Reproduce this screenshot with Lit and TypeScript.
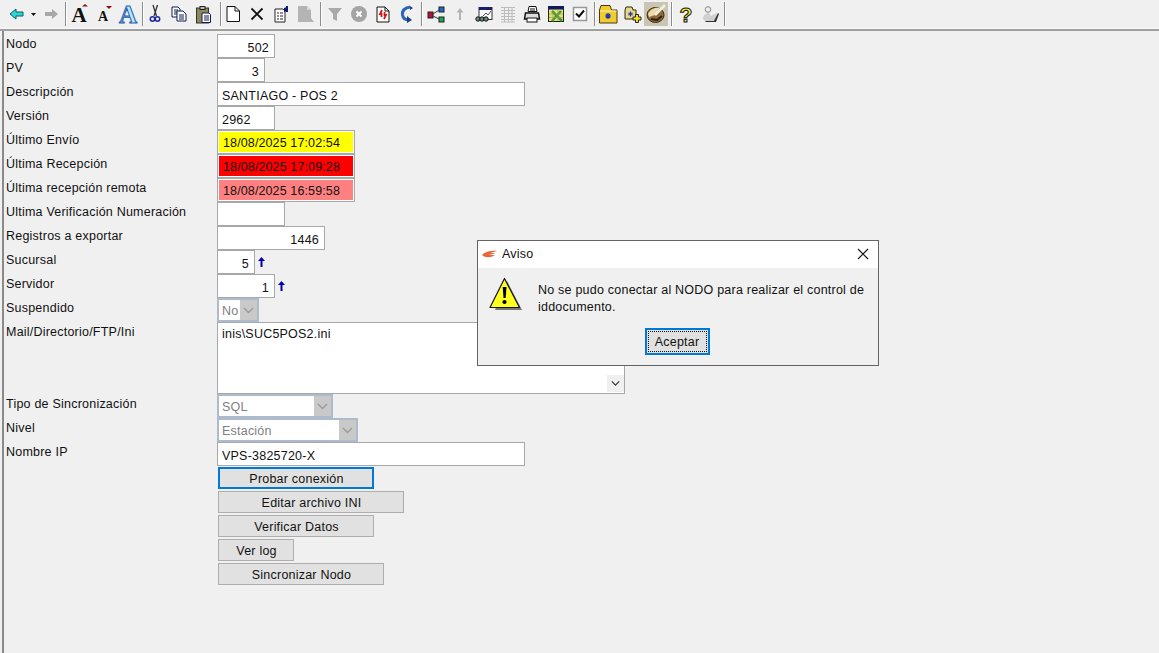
import { LitElement, html, css, svg } from "lit";
import { customElement } from "lit/decorators.js";

const ICONS: Record<string, unknown> = {
  back: svg`<path d="M3 10 9 5v3h7v4H9v3z" fill="#2ad6d6" stroke="#0b5f68" stroke-width="1"/>`,
  drop: svg`<path d="M7 9h5l-2.500 3z" fill="#111"/>`,
  fwd: svg`<path d="M17 10 11 5v3H4v4h7v3z" fill="#a8a8a8"/>`,
  abig: svg`<text x="9" y="18" text-anchor="middle" class="sf" font-size="21" font-weight="700" fill="#111">A</text><path d="M12 2.500l3-2.500 3 2.500z" fill="#8b1010"/>`,
  asmall: svg`<text x="9" y="16.500" text-anchor="middle" class="sf" font-size="14" font-weight="700" fill="#111">A</text><path d="M12 2h6l-3 3z" fill="#8b1010"/>`,
  ablue: svg`<text x="10" y="19" text-anchor="middle" class="sf" font-size="25" font-weight="700" fill="#bfe6f8" stroke="#1f5fb0" stroke-width="1">A</text>`,
  cut: svg`<path d="M8 1l3.500 11M12.500 1 9 12" stroke="#333" stroke-width="1.300" fill="none"/><circle cx="7.500" cy="15" r="2.200" fill="none" stroke="#1d2a9c" stroke-width="1.500"/><circle cx="12.500" cy="15" r="2.200" fill="none" stroke="#1d2a9c" stroke-width="1.500"/>`,
  copy: svg`<path d="M3 3h6l2 2v8H3z" fill="#fff" stroke="#101a50"/><path d="M8 7h6l3 3v7H8z" fill="#fff" stroke="#101a50"/><path d="M5 6h4M5 8h3M5 10h3M10 11h5M10 13h5M10 15h5" stroke="#101a50"/>`,
  paste: svg`<rect x="3.500" y="4" width="12" height="15" fill="#8a8a5c" stroke="#333"/><rect x="7" y="2.500" width="5" height="3" fill="#bbb" stroke="#222"/><path d="M9 9h7l1.500 1.500V18.500H9z" fill="#fff" stroke="#101a50"/><path d="M11 12h5M11 14h5M11 16h5" stroke="#101a50"/>`,
  newdoc: svg`<path d="M4 2.500h8l4.500 4.500v10.500H4z" fill="#fff" stroke="#111"/><path d="M12 2.500V7h4.500" fill="none" stroke="#111"/>`,
  del: svg`<path d="M4.500 4.500l11 11M15.500 4.500l-11 11" stroke="#111" stroke-width="1.800"/>`,
  props: svg`<path d="M4 5h8l2 2v11H4z" fill="#fff" stroke="#222"/><path d="M6 9h2M9 9h3M6 12h2M9 12h3M6 15h2M9 15h3" stroke="#222"/><path d="M13 4l3-1v4l-3 1z" fill="#111a70"/><path d="M16 2v6" stroke="#111a70" stroke-width="2"/>`,
  gdoc: svg`<path d="M3 2h9l4 4v8l3 4h-3H3z" fill="#b4b4b4"/><path d="M12 2v4h4" fill="#d6d6d6"/>`,
  filter: svg`<path d="M3 4h14l-5 6v7l-4-2v-5z" fill="#a9a9a9"/>`,
  stop: svg`<circle cx="10" cy="10" r="8" fill="#a4a4a4"/><path d="M7.500 7.500l5 5M12.500 7.500l-5 5" stroke="#fff" stroke-width="2"/>`,
  reddoc: svg`<path d="M4 3h8l4 4v11H4z" fill="#fff" stroke="#111"/><path d="M12 3v4h4" fill="none" stroke="#111"/><path d="M9 6 7 10h1.500v3M11 15l2-4h-1.500V8" stroke="#d01515" stroke-width="1.800" fill="none"/>`,
  refresh: svg`<path d="M13 3C7 4 5 7 5.500 11c.5 3 3 5 6.500 5" fill="none" stroke="#2a66b8" stroke-width="3"/><path d="M10 12l5 4-5 3z" fill="#1b3f80"/><path d="M13 2v4l3-2z" fill="#1b3f80"/>`,
  tree: svg`<rect x="2" y="8" width="5" height="6" fill="#b0123a" stroke="#222"/><rect x="13" y="3" width="5" height="5" fill="#2066d0" stroke="#222"/><rect x="13" y="13" width="5" height="5" fill="#16a84a" stroke="#222"/><path d="M7 10l6-4M7 12l6 3" stroke="#333"/>`,
  up: svg`<path d="M10 4 6.500 8.500H9V16h2V8.500h2.500z" fill="#b4b4b4"/>`,
  chart: svg`<rect x="5" y="3.500" width="13" height="12" fill="#fff" stroke="#333"/><rect x="5" y="3" width="13" height="3" fill="#16206a"/><path d="M9 12l3-3 2 2 3-4" stroke="#555" fill="none"/><circle cx="4" cy="15" r="2.200" fill="#6c8c80" stroke="#111"/><circle cx="8" cy="15" r="2.200" fill="#6c8c80" stroke="#111"/><circle cx="12" cy="15" r="2.200" fill="#6c8c80" stroke="#111"/>`,
  grid: svg`<path d="M3 3.500h14M3 6.500h14M3 9.500h14M3 12.500h14M3 15.500h14M3 18h14M6.500 3v15M10.500 3v15M14 3v15" stroke="#bcbcbc" fill="none"/>`,
  print: svg`<path d="M7 2.500h7l1 5H6z" fill="#fff" stroke="#111"/><path d="M3.500 9h13l1 6h-15z" fill="#ddd" stroke="#111" stroke-width="1.500"/><rect x="5" y="14" width="10" height="4" fill="#fff" stroke="#111"/><path d="M8 5h5M8 7h5" stroke="#111"/>`,
  excel: svg`<rect x="2.500" y="2.500" width="15" height="15" fill="#e4e070" stroke="#222"/><rect x="2" y="2" width="16" height="3.500" fill="#101a60"/><path d="M6 7l10 10M15 7 6 17" stroke="#3f9a3f" stroke-width="2.500"/><path d="M3 10h14M3 13.500h14M7 6v11M12 6v11" stroke="#9aa04a" stroke-width=".7"/>`,
  check: svg`<rect x="3.500" y="3.500" width="13" height="13" fill="#fff" stroke="#999" stroke-width="1.500"/><path d="M6 9.500l3 3 5-6" stroke="#111" stroke-width="2" fill="none"/>`,
  folder: svg`<path d="M1.500 6l1.500-4.500h9L13.500 6h5.500v13H1.500z" fill="#f0cc30" stroke="#4a3a10"/><path d="M2 7h16.500" stroke="#fff3a0"/><path d="M10 9v6M7 12h6M8 10l4 4M12 10l-4 4" stroke="#2030b0" stroke-width="1.200"/>`,
  folderplus: svg`<path d="M3 6l1-3h6l1 3h3v9H3z" fill="#e6d88a" stroke="#332a10"/><path d="M8.500 7.500v5M6 10h5M7 8.500l3 3M10 8.500l-3 3" stroke="#2030a0"/><path d="M13.500 10.500h3v2.500h2.500v3h-2.500v2.500h-3V16H11v-3h2.500z" fill="#f5e020" stroke="#222"/>`,
  palette: svg`<rect x="-2" y="-2" width="24" height="24" fill="#c9c4b4"/><ellipse cx="9.500" cy="11" rx="8.500" ry="7.500" fill="#8c6a3a" stroke="#3a2a10"/><path d="M2 10C4 5 9 3 14 4L9 11 3 13z" fill="#ecdca8"/><path d="M19 1 9 11" stroke="#f4f0e0" stroke-width="2.500"/><path d="M5 15l6 1 5-4" stroke="#2f2010" stroke-width="2" fill="none"/>`,
  help: svg`<text x="10" y="18" text-anchor="middle" class="sn" font-size="21" font-weight="700" fill="#f6ec3a" stroke="#111" stroke-width="1">?</text>`,
  user: svg`<circle cx="8" cy="5.500" r="2.800" fill="#ececec" stroke="#888"/><path d="M3 15c0-4 3-6 6-6l2 3 6-3-2 8H5z" fill="#d0d0d0"/><path d="M5 17h9l4-8 1 1-3 8H6z" fill="#333"/>`,
};

type Tool = { i?: string; w: number; line?: number };
const icons = (...names: string[]): Tool[] => names.map((i) => ({ i, w: 24 }));
const TOOLS: Tool[] = [
  { i: "back", w: 24 }, { i: "drop", w: 10 }, { i: "fwd", w: 24 }, { w: 5, line: 2 },
  ...icons("abig", "asmall", "ablue"), { w: 3, line: 2 },
  ...icons("cut", "copy", "paste"), { w: 6, line: 5 },
  ...icons("newdoc", "del", "props", "gdoc"), { w: 6, line: 3 },
  ...icons("filter", "stop", "reddoc", "refresh"), { w: 5, line: 2 },
  ...icons("tree", "up", "chart", "grid", "print", "excel", "check"), { w: 4, line: 2 },
  ...icons("folder", "folderplus", "palette"), { w: 6, line: 3 },
  ...icons("help", "user"), { w: 3, line: 2 },
];

const UP = html`<svg class="uparrow" width="9" height="12" viewBox="0 0 9 12"><path d="M4.500 1 1 5h2.500v6h2V5H8z" fill="#0000b0"/></svg>`;

@customElement("app-root")
export class AppRoot extends LitElement {
  static styles = css`
    :host { display: block; width: 1159px; height: 653px; position: relative; overflow: hidden; background: #f0f0f0; font-family: "Liberation Sans", Arial, sans-serif; font-size: 12.5px; letter-spacing: .22px; color: #111; }
    .toolbar { height: 29px; box-sizing: border-box; display: flex; align-items: center; padding-left: 5px; border-bottom: 1px solid #f8f8f8; }
    .tool { height: 20px; display: flex; justify-content: center; align-items: center; flex: none; }
    .tool svg { overflow: visible; }
    .sf { font-family: "Liberation Serif", serif; letter-spacing: 0; }
    .sn { font-family: "Liberation Sans", sans-serif; letter-spacing: 0; }
    .sep { height: 24px; flex: none; display: flex; box-sizing: border-box; }
    .sep i { display: block; width: 1px; height: 24px; background: #8c8c8c; box-shadow: 1px 0 0 #fff; }
    .main { border-top: 2px solid #a0a0a0; height: 624px; box-sizing: border-box; padding-left: 2px; }
    .frame { border-left: 2px solid #8a8a8a; height: 100%; padding: 3px 0 0 2px; box-sizing: border-box; }
    .row { display: flex; height: 24px; }
    .row.tall { height: 72px; }
    .lab { width: 211px; flex: none; padding-top: 3px; line-height: 14px; }
    .input { box-sizing: border-box; height: 24px; background: #fff; border: 1px solid #a8a8a8; padding: 3px 4px 0; display: flex; align-items: center; line-height: 14px; }
    .input.r { justify-content: flex-end; padding-right: 5px; }
    .w38 { width: 38px; } .w48 { width: 48px; } .w58 { width: 58px; } .w68 { width: 68px; } .w108 { width: 108px; } .w308 { width: 308px; }
    .date { width: 138px; box-shadow: inset 0 0 0 1px #fff; padding: 1px 0 0 5px; letter-spacing: .12px; }
    .yellow { background: #ffff00; } .red { background: #ff0000; } .pink { background: #ff8080; }
    .uparrow { margin: 6px 0 0 2px; }
    .select { box-sizing: border-box; height: 24px; background: #fff; border: 2px solid #aebbcd; display: flex; color: #808080; align-items: stretch; }
    .select span { flex: 1; padding: 4px 0 0 3px; line-height: 15px; }
    .select b { width: 17px; background: #c9c9c9; display: flex; align-items: center; justify-content: center; }
    .area { box-sizing: border-box; width: 408px; height: 72px; background: #fff; border: 1px solid #a8a8a8; padding: 4px; position: relative; line-height: 14px; }
    .scroll { position: absolute; right: 0; bottom: 1px; width: 17px; height: 17px; background: #f0f0f0; display: flex; align-items: center; justify-content: center; }
    .buttons { display: flex; flex-direction: column; gap: 2px; margin: 1px 0 0 212px; align-items: flex-start; }
    .btn { box-sizing: border-box; height: 22px; background: #e1e1e1; border: 1px solid #adadad; display: flex; align-items: center; justify-content: center; line-height: 14px; padding: 1px 0 0 1px; color: #111; }
    .btn.focus { border: 2px solid #0078d7; }
    .dialog { position: absolute; left: 477px; top: 240px; width: 402px; height: 126px; box-sizing: border-box; background: #f0f0f0; border: 1px solid #646464; display: flex; flex-direction: column; }
    .title { height: 25px; background: #fff; flex: none; display: flex; align-items: center; padding: 0 9px 2px 4px; gap: 5px; }
    .title span { flex: 1; }
    .body { display: flex; padding: 9px 0 0 11px; }
    .msg { margin-left: 15px; width: 332px; line-height: 17px; padding-top: 5px; }
    .msg-wrap { height: 51px; }
    .actions { display: flex; justify-content: center; padding-right: 2px; }
    .ok { box-sizing: border-box; width: 65px; height: 27px; border: 2px solid #0078d7; background: #e1e1e1; display: flex; align-items: center; justify-content: center; outline: 1px dotted #111; outline-offset: -4px; }
  `;

  private chev(color = "#9a9a9a", size = 11) {
    return html`<svg width=${size} height="7" viewBox="0 0 11 7"><path d="M1 1l4.500 4.500L10 1" fill="none" stroke=${color} stroke-width="1.400"/></svg>`;
  }

  private row(label: string, content: unknown, cls = "") {
    return html`<div class="row ${cls}"><div class="lab">${label}</div>${content}</div>`;
  }

  render() {
    return html`
      <div class="toolbar">
        ${TOOLS.map((t) =>
          t.i
            ? html`<div class="tool" style="width:${t.w}px"><svg width="20" height="20" viewBox="0 0 20 20">${ICONS[t.i]}</svg></div>`
            : html`<div class="sep" style="width:${t.w}px;padding-left:${t.line}px"><i></i></div>`
        )}
      </div>
      <div class="main"><div class="frame">
        ${this.row("Nodo", html`<div class="input r w58">502</div>`)}
        ${this.row("PV", html`<div class="input r w48">3</div>`)}
        ${this.row("Descripción", html`<div class="input w308">SANTIAGO - POS 2</div>`)}
        ${this.row("Versión", html`<div class="input w58">2962</div>`)}
        ${this.row("Último Envío", html`<div class="input date yellow">18/08/2025 17:02:54</div>`)}
        ${this.row("Última Recepción", html`<div class="input date red">18/08/2025 17:09:28</div>`)}
        ${this.row("Última recepción remota", html`<div class="input date pink">18/08/2025 16:59:58</div>`)}
        ${this.row("Ultima Verificación Numeración", html`<div class="input w68"></div>`)}
        ${this.row("Registros a exportar", html`<div class="input r w108">1446</div>`)}
        ${this.row("Sucursal", html`<div class="input r w38">5</div>${UP}`)}
        ${this.row("Servidor", html`<div class="input r w58">1</div>${UP}`)}
        ${this.row("Suspendido", html`<div class="select" style="width:42px"><span>No</span><b>${this.chev()}</b></div>`)}
        ${this.row("Mail/Directorio/FTP/Ini", html`<div class="area">inis\\SUC5POS2.ini<div class="scroll">${this.chev("#333", 9)}</div></div>`, "tall")}
        ${this.row("Tipo de Sincronización", html`<div class="select" style="width:116px"><span>SQL</span><b>${this.chev()}</b></div>`)}
        ${this.row("Nivel", html`<div class="select" style="width:141px"><span>Estación</span><b>${this.chev()}</b></div>`)}
        ${this.row("Nombre IP", html`<div class="input w308">VPS-3825720-X</div>`)}
        <div class="buttons">
          <div class="btn focus" style="width:156px">Probar conexión</div>
          <div class="btn" style="width:186px">Editar archivo INI</div>
          <div class="btn" style="width:156px">Verificar Datos</div>
          <div class="btn" style="width:76px">Ver log</div>
          <div class="btn" style="width:166px">Sincronizar Nodo</div>
        </div>
      </div></div>
      <div class="dialog">
        <div class="title">
          <svg width="15" height="8" viewBox="0 0 15 8"><path d="M0 5C3 2 8 0 15 1L8 3h6L7 5h6C9 8 3 8 0 5z" fill="#e8663a"/></svg>
          <span>Aviso</span>
          <svg width="12" height="12" viewBox="0 0 12 12"><path d="M1 1l10 10M11 1 1 11" stroke="#111" stroke-width="1.100"/></svg>
        </div>
        <div class="body">
          <svg width="34" height="34" viewBox="0 0 34 34" style="flex:none">
            <path d="M18 4 33 33H6z" fill="#777"/>
            <path d="M15.500 1.500 30.500 30.500H1z" fill="#ffff20" stroke="#111" stroke-width="1.200" stroke-linejoin="round"/>
            <path d="M13.700 10h3.800l-.8 11h-2.200z" fill="#000"/><circle cx="15.500" cy="25" r="2.100" fill="#000"/>
          </svg>
          <div class="msg-wrap"><div class="msg">No se pudo conectar al NODO para realizar el control de iddocumento.</div></div>
        </div>
        <div class="actions"><div class="ok">Aceptar</div></div>
      </div>
    `;
  }
}
